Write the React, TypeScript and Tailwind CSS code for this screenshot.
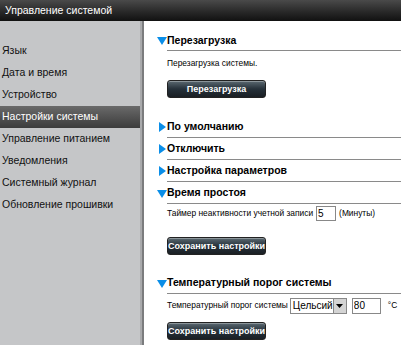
const menu = [
  'Язык',
  'Дата и время',
  'Устройство',
  'Настройки системы',
  'Управление питанием',
  'Уведомления',
  'Системный журнал',
  'Обновление прошивки',
];

function Tri({ open }: { open: boolean }) {
  return open ? (
    <svg width="10" height="8" viewBox="0 0 10 8" className="shrink-0">
      <polygon points="0,0 10,0 5,8" fill="#0a8ee8" />
    </svg>
  ) : (
    <svg width="10" height="10" viewBox="0 0 10 10" className="shrink-0">
      <polygon points="2,0 9,5 2,10" fill="#0a8ee8" />
    </svg>
  );
}

function Section({ title, open }: { title: string; open: boolean }) {
  return (
    <div className="flex items-end h-[22px]">
      <div className="w-[10px] flex justify-end mb-[6px]">
        <Tri open={open} />
      </div>
      <div className="flex-1 border-b border-[#8a8a8a] h-full flex items-center pt-[2px]">
        <span className="text-[10.5px] font-bold text-black">{title}</span>
      </div>
    </div>
  );
}

function DarkButton({ label }: { label: string }) {
  return (
    <button className="w-[99px] h-[18px] rounded-[3px] border border-[#222] bg-gradient-to-b from-[#5c6a72] via-[#26313a] to-[#1a1f24] text-white text-[9px] font-bold leading-none whitespace-nowrap shadow-[inset_0_1px_0_rgba(255,255,255,0.3)]">
      {label}
    </button>
  );
}

export default function App() {
  return (
    <div className="w-[401px] h-[345px] overflow-hidden bg-white" style={{ fontFamily: '"Liberation Sans", Arial, sans-serif' }}>
      <div className="h-[21px] bg-gradient-to-b from-[#4a4a4a] to-[#111] flex items-center pl-[5px]">
        <span className="text-white text-[10.5px]">Управление системой</span>
      </div>
      <div className="flex h-[324px]">
        <div className="w-[144px] flex shrink-0">
          <div className="flex-1 bg-[#c5c6c8] pt-[19px]">
            {menu.map((m) => (
              <div
                key={m}
                className={
                  m === 'Настройки системы'
                    ? 'h-[22px] flex items-center pl-[2px] text-[10.5px] text-white bg-gradient-to-b from-[#6a6a6a] to-[#3c3c3c]'
                    : 'h-[22px] flex items-center pl-[2px] text-[10.5px] text-[#111]'
                }
              >
                {m}
              </div>
            ))}
          </div>
          <div className="w-[2px] bg-[#a9aaac]" />
          <div className="w-[2px] bg-[#7b7c7e]" />
        </div>
        <div className="flex-1 pl-[13px] pt-[8px] whitespace-nowrap">
          <Section title="Перезагрузка" open />
          <div className="pl-[10px]">
            <div className="text-[8.4px] text-black mt-[6px]">Перезагрузка системы.</div>
            <div className="mt-[5px]">
              <DarkButton label="Перезагрузка" />
            </div>
          </div>
          <div className="mt-[17px]">
            <Section title="По умолчанию" open={false} />
            <Section title="Отключить" open={false} />
            <Section title="Настройка параметров" open={false} />
            <Section title="Время простоя" open />
          </div>
          <div className="pl-[10px]">
            <div className="flex items-center mt-[2px] text-[8.4px] text-black gap-[3px]">
              <span>Таймер неактивности учетной записи</span>
              <input className="w-[20px] h-[15px] border border-[#888] text-[10px] px-[1px] outline-none" defaultValue="5" />
              <span>(Минуты)</span>
            </div>
            <div className="mt-[11px]">
              <DarkButton label="Сохранить настройки" />
            </div>
          </div>
          <div className="mt-[16px]">
            <Section title="Температурный порог системы" open />
          </div>
          <div className="pl-[10px]">
            <div className="flex items-center mt-[4px] text-[8.4px] text-black">
              <span>Температурный порог системы</span>
              <div className="ml-[2px] w-[57px] h-[16px] border border-[#888] flex items-center text-[10px]">
                <span className="flex-1 pl-[2px]">Цельсий</span>
                <div className="w-[14px] h-[14px] bg-[#d4d4d4] border-l border-[#888] flex items-center justify-center">
                  <svg width="7" height="4" viewBox="0 0 7 4"><polygon points="0,0 7,0 3.5,4" fill="#000" /></svg>
                </div>
              </div>
              <input className="ml-[5px] w-[29px] h-[16px] border border-[#888] text-[10px] px-[1px] outline-none" defaultValue="80" />
              <span className="ml-[7px]">°C</span>
            </div>
            <div className="mt-[3px]">
              <DarkButton label="Сохранить настройки" />
            </div>
          </div>
        </div>
      </div>
    </div>
  );
}
